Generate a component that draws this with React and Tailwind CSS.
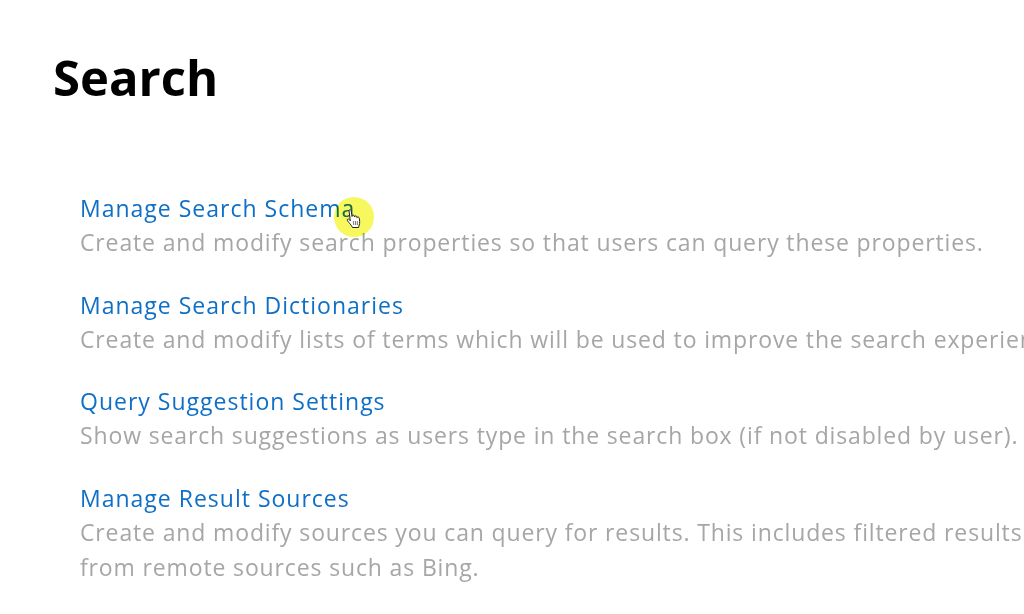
import React from "react";

const items = [
  {
    title: "Manage Search Schema",
    lines: ["Create and modify search properties so that users can query these properties."],
  },
  {
    title: "Manage Search Dictionaries",
    lines: ["Create and modify lists of terms which will be used to improve the search experience"],
  },
  {
    title: "Query Suggestion Settings",
    lines: ["Show search suggestions as users type in the search box (if not disabled by user)."],
  },
  {
    title: "Manage Result Sources",
    lines: [
      "Create and modify sources you can query for results. This includes filtered results",
      "from remote sources such as Bing.",
    ],
  },
];

/* Mouse pointer sitting on the first link */
const HandCursor = () => (
  <svg width="16" height="20" viewBox="0 0 16 20" className="absolute left-[12px] top-[12px]">
    <path
      d="M3 1.500C3 .5 5 .5 5.200 1.500L6 7.500L6.500 6.500C7 5.800 8.200 6 8.300 7L8.500 8L9 7.200C9.500 6.600 10.600 6.800 10.700 7.700L10.900 8.700L11.500 8.200C12.200 7.800 13.200 8.200 13.300 9.200C13.600 11.500 14 14 13.200 16L12.600 18.500H6.500C6 17 4.800 15.800 3.500 14.300C2.500 13 1 11.500 1.300 10.500C1.600 9.700 2.800 9.900 3.500 10.800L4.300 11.800L3 1.500Z"
      fill="#fff"
      stroke="#222"
      strokeWidth="1"
      strokeLinejoin="round"
    />
    <path d="M7.300 12L7.800 16M9.400 12L9.700 16M11.300 12L11.400 16" stroke="#555" strokeWidth="0.800" fill="none" />
  </svg>
);

export default function App() {
  return (
    <div className="w-[1024px] h-[614px] overflow-hidden bg-white font-['Open_Sans','Noto_Sans',sans-serif] pl-[53px] pt-[42px]">
      <h1 className="text-[49px] leading-[70px] font-bold text-black">Search</h1>
      <div className="mt-[79px] ml-[27px] flex flex-col gap-[27.5px]">
        {items.map((item) => (
          <div key={item.title}>
            <div className="relative w-fit text-[23px] leading-[34px] tracking-[1px] text-[#0f6fc6]">
              {item.title}
              {item.title === "Manage Search Schema" && (
                <span className="absolute right-[-19px] top-[6px] w-10 h-10">
                  <span className="block w-10 h-10 rounded-full bg-[#f7f75e] mix-blend-multiply" />
                  <HandCursor />
                </span>
              )}
            </div>
            {item.lines.map((line) => (
              <p key={line} className="whitespace-nowrap text-[23px] leading-[35px] tracking-[0.86px] text-[#a6a6a6]">
                {line}
              </p>
            ))}
          </div>
        ))}
      </div>
    </div>
  );
}
